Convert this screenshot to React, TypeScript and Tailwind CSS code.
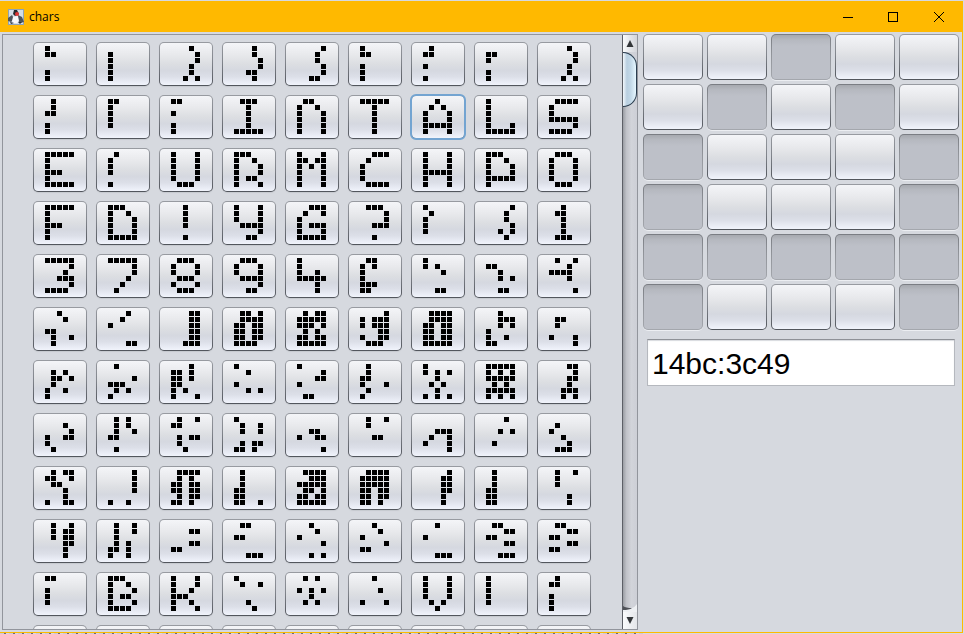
import { useState } from "react";

/* Each glyph is six rows of five bits; 16 is the leftmost column. */
const GLYPHS: number[][][] = [
  [
    [16, 24, 0, 0, 16, 16], [0, 16, 16, 16, 16, 16], [2, 1, 1, 2, 2, 5],
    [2, 2, 1, 1, 6, 2], [1, 2, 2, 1, 1, 6], [16, 24, 0, 16, 16, 16],
    [8, 24, 0, 16, 0, 16], [0, 24, 16, 0, 16, 16], [2, 1, 1, 2, 2, 5],
  ],
  [
    [8, 8, 24, 0, 16, 16], [24, 16, 16, 16, 16, 0], [24, 0, 16, 0, 16, 16],
    [14, 4, 4, 4, 4, 31], [12, 18, 17, 17, 17, 17], [31, 4, 4, 4, 4, 4],
    [4, 10, 17, 17, 31, 17], [16, 16, 16, 16, 17, 31], [15, 16, 16, 31, 1, 30],
  ],
  [
    [31, 16, 16, 28, 16, 31], [8, 16, 16, 16, 0, 16], [17, 17, 17, 17, 17, 14],
    [28, 18, 17, 17, 22, 17], [17, 27, 21, 17, 17, 17], [7, 8, 16, 16, 16, 15],
    [17, 17, 17, 31, 17, 17], [28, 18, 17, 17, 31, 16], [14, 17, 17, 17, 17, 14],
  ],
  [
    [31, 16, 16, 28, 16, 16], [28, 18, 17, 17, 17, 31], [4, 4, 4, 4, 0, 4],
    [17, 17, 17, 15, 1, 6], [7, 9, 16, 23, 17, 31], [14, 1, 1, 7, 0, 4],
    [16, 8, 16, 16, 16, 0], [1, 2, 2, 1, 5, 2], [4, 12, 4, 4, 4, 14],
  ],
  [
    [31, 1, 2, 7, 1, 30], [31, 1, 1, 2, 4, 8], [14, 17, 17, 14, 17, 14],
    [14, 17, 17, 15, 1, 6], [16, 16, 18, 31, 2, 2], [12, 20, 16, 16, 28, 24],
    [16, 20, 2, 0, 0, 6], [0, 24, 4, 5, 0, 6], [9, 2, 30, 2, 0, 1],
  ],
  [
    [4, 2, 0, 24, 9, 8], [2, 4, 16, 0, 0, 3], [3, 3, 3, 3, 3, 7],
    [13, 15, 27, 27, 27, 30], [11, 31, 29, 10, 27, 31], [1, 23, 23, 3, 19, 14],
    [15, 15, 27, 27, 27, 31], [4, 7, 5, 16, 18, 24], [0, 12, 8, 0, 17, 1],
  ],
  [
    [0, 10, 13, 8, 18, 16], [8, 0, 1, 28, 10, 16], [2, 26, 26, 24, 20, 17],
    [16, 4, 0, 16, 5, 0], [16, 1, 3, 16, 0, 12], [8, 8, 24, 17, 8, 16],
    [16, 21, 4, 10, 4, 21], [31, 21, 31, 10, 31, 21], [3, 1, 3, 2, 7, 5],
  ],
  [
    [0, 2, 1, 19, 16, 8], [10, 10, 9, 24, 0, 8], [9, 24, 0, 11, 8, 4],
    [16, 9, 9, 0, 11, 26], [0, 0, 6, 19, 0, 1], [9, 8, 0, 6, 0, 0],
    [0, 0, 7, 9, 17, 1], [2, 0, 5, 0, 8, 0], [0, 8, 16, 4, 2, 14],
  ],
  [
    [11, 25, 12, 2, 2, 19], [1, 1, 1, 1, 0, 18], [15, 10, 27, 27, 11, 26],
    [8, 8, 8, 24, 24, 25], [15, 7, 31, 13, 27, 31], [15, 31, 31, 27, 27, 26],
    [1, 3, 3, 3, 2, 2], [8, 8, 8, 24, 24, 24], [9, 8, 8, 0, 2, 2],
  ],
  [
    [9, 11, 11, 3, 2, 2], [9, 9, 8, 10, 26, 18], [0, 3, 0, 3, 24, 0],
    [12, 0, 24, 0, 0, 7], [4, 2, 16, 1, 0, 5], [4, 2, 16, 1, 24, 0],
    [4, 0, 16, 0, 0, 7], [12, 3, 24, 3, 0, 7], [12, 3, 24, 3, 24, 0],
  ],
  [
    [24, 0, 16, 16, 16, 0], [28, 18, 17, 22, 17, 30], [17, 17, 18, 28, 18, 17],
    [16, 9, 0, 0, 4, 2], [10, 0, 21, 4, 10, 0], [4, 0, 2, 0, 17, 0],
    [17, 17, 17, 17, 10, 4], [16, 16, 16, 16, 16, 0], [8, 24, 0, 16, 16, 16],
  ],
  Array.from({ length: 9 }, () => [0, 0, 0, 0, 0, 0]),
];

const PATTERN = [
  [0, 0, 1, 0, 0],
  [0, 1, 0, 1, 0],
  [1, 0, 0, 0, 1],
  [1, 0, 0, 0, 1],
  [1, 1, 1, 1, 1],
  [1, 0, 0, 0, 1],
];

const RAISED =
  "border border-transparent [background:linear-gradient(#f4f5f8,#e7e8eb_30%,#dcdee2_50%,#d5d8e0_66%,#dcdfe8_80%,#f1f4fc)_padding-box,linear-gradient(#989ba1,#81858c_45%,#51555c)_border-box]";
const PRESSED =
  "border border-transparent shadow-[0_1px_0_#eceef2] [background:linear-gradient(#a6a9af,#b5b8bf_10%,#bdc0c8_25%,#bdc0c8)_padding-box,linear-gradient(#7a7d83,#92959b_45%,#a4a7ad)_border-box]";

function Glyph({ rows }: { rows: number[] }) {
  return (
    <svg width="30" height="36" viewBox="0 0 30 36" className="block shrink-0" aria-hidden="true">
      {rows.flatMap((bits, y) =>
        [16, 8, 4, 2, 1].map((mask, x) =>
          bits & mask ? <rect key={`${x}-${y}`} x={x * 6} y={y * 6} width="5" height="5" /> : null,
        ),
      )}
    </svg>
  );
}

function TitleBar() {
  return (
    <header className="flex h-[31px] shrink-0 items-center bg-[#ffb900] pl-2">
      <svg width="16" height="16" viewBox="0 0 16 16" aria-hidden="true">
        <rect width="16" height="16" fill="#8fa3b5" />
        <rect x="1" y="1" width="14" height="14" fill="#d3dde6" />
        <path d="M0 9l4-3 2 4-3 3-3-1zM10 6l4 2 2 5-4 1-3-3z" fill="#4b545c" />
        <path d="M6 1l3 0 2 4-4 2-2-2z" fill="#25292d" />
        <path d="M5 8l5-1 1 5-2 2H6l-2-2z" fill="#f7f8f9" />
        <path d="M2 13l4 1-3 1zM10 13l4 0-2 2z" fill="#2a3036" />
        <circle cx="9" cy="5" r="2" fill="#dd3434" />
      </svg>
      <h1 className="ml-[5px] flex-1 font-['Open_Sans','Noto_Sans',sans-serif] text-xs leading-4 text-black">chars</h1>
      <button type="button" aria-label="Minimize" className="flex h-full w-[45px] items-center justify-center">
        <svg width="10" height="10" shapeRendering="crispEdges"><path d="M0 5.500h10" stroke="#000" /></svg>
      </button>
      <button type="button" aria-label="Maximize" className="flex h-full w-[46px] items-center justify-center">
        <svg width="10" height="10" shapeRendering="crispEdges"><rect x=".5" y=".5" width="9" height="9" fill="none" stroke="#000" /></svg>
      </button>
      <button type="button" aria-label="Close" className="flex h-full w-[46px] items-center justify-center">
        <svg width="10" height="10"><path d="M0 0l10 10M10 0L0 10" stroke="#000" /></svg>
      </button>
    </header>
  );
}

function ScrollBar() {
  return (
    <div className="flex w-[15px] shrink-0 flex-col border-l border-[#5c5f66] bg-[linear-gradient(90deg,#9b9ea4,#c0c2c8_25%,#d2d4da_60%,#cdcfd6)]">
      <button type="button" aria-label="Scroll up" className="flex h-[17px] shrink-0 items-center justify-center bg-[linear-gradient(90deg,#fafbfc,#e4e6ea_50%,#d3d5da)]">
        <svg width="8" height="8"><path d="M4 0l3.500 7h-7z" fill="#333639" /></svg>
      </button>
      <div className="flex flex-1 flex-col overflow-hidden">
        <div className="h-[55px] rounded-r-[14px] border border-l-0 border-[#2b3e50] bg-[linear-gradient(90deg,#f2f7fb,#b9cfe0_30%,#c3d9e8_60%,#e6f7ff)]" />
      </div>
      <svg width="14" height="8" viewBox="0 0 14 8" className="shrink-0" aria-hidden="true">
        <path d="M0 5q6 1 9-1q3-1 5-4v8H0z" fill="#eef0f3" />
        <path d="M0 2q3 2 9 2q-3 2-9 2z" fill="#4f5258" />
      </svg>
      <button type="button" aria-label="Scroll down" className="flex h-[17px] shrink-0 items-center justify-center bg-[linear-gradient(90deg,#fafbfc,#e4e6ea)]">
        <svg width="8" height="8"><path d="M4 7L.5 0h7z" fill="#333639" /></svg>
      </button>
    </div>
  );
}

export default function App() {
  const [selected, setSelected] = useState("1-6");
  const [pattern, setPattern] = useState(PATTERN);
  const toggle = (r: number, c: number) =>
    setPattern(pattern.map((row, y) => row.map((v, x) => (y === r && x === c ? 1 - v : v))));

  return (
    <div className="flex h-screen flex-col overflow-hidden bg-[#d6d9df] pt-px pr-px font-['Liberation_Sans',Arial,sans-serif]">
      <div className="flex min-h-0 flex-1 flex-col border-r border-b border-[#ffb900]">
        <TitleBar />
        <main className="flex min-h-0 flex-1 pt-0.5 pl-0.5">
          <section aria-label="Characters" className="mb-0.5 flex min-w-0 flex-1 border border-[#92959c]">
            <div className="min-w-0 flex-1 overflow-hidden pt-[7px] pl-[30px]">
              <div className="grid grid-cols-[repeat(9,54px)] gap-[9px]">
                {GLYPHS.map((line, r) =>
                  line.map((rows, c) => {
                    const id = `${r}-${c}`;
                    return (
                      <button
                        key={id}
                        type="button"
                        aria-label={`Character ${r * 9 + c + 1}`}
                        onClick={() => setSelected(id)}
                        className={`flex h-11 items-center justify-center rounded-[5px] ${RAISED} ${
                          selected === id ? "outline-2 -outline-offset-1 outline-[#73a4d1]" : "shadow-[0_1px_1px_#c6c9cf]"
                        }`}
                      >
                        <Glyph rows={rows} />
                      </button>
                    );
                  }),
                )}
              </div>
            </div>
            <ScrollBar />
          </section>
          <aside className="w-[324px] shrink-0 pl-[5px]">
            <div className="grid grid-cols-5 gap-1 pr-[3px]">
              {pattern.map((row, r) =>
                row.map((on, c) => (
                  <button
                    key={`${r}-${c}`}
                    type="button"
                    aria-label={`Row ${r + 1}, column ${c + 1}`}
                    aria-pressed={on === 1}
                    onClick={() => toggle(r, c)}
                    className={`h-[46px] rounded-[5px] ${on ? PRESSED : RAISED}`}
                  />
                )),
              )}
            </div>
            <input
              type="text"
              aria-label="Address"
              defaultValue="14bc:3c49"
              className="mt-[9px] ml-1 block h-[47px] w-[308px] border border-[#b5b8be] border-t-[#8e9197] bg-white px-1 pt-0.5 text-[30px] text-black shadow-[inset_0_1px_1px_#d8dade] outline-none"
            />
          </aside>
        </main>
      </div>
      <div className="mr-80 h-px shrink-0 bg-[repeating-linear-gradient(90deg,#c9ccd2_0_4px,#6d6a74_4px_6px,#d6d9df_6px_9px)]" />
    </div>
  );
}
